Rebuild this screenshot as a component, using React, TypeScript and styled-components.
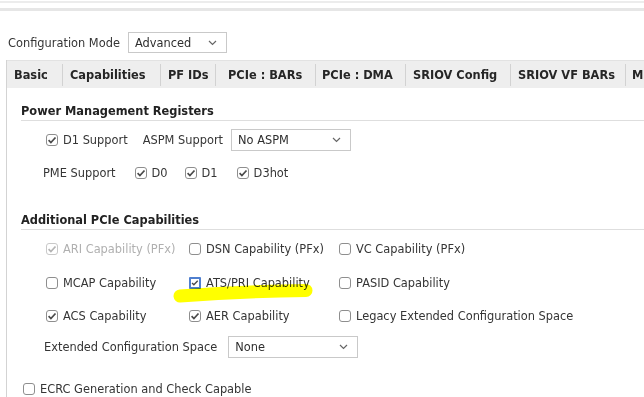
import React from 'react';
import styled, { createGlobalStyle } from 'styled-components';

const GlobalStyle = createGlobalStyle`
  html, body {
    margin: 0;
    padding: 0;
    background: #ffffff;
  }
  body {
    font-family: 'DejaVu Sans', 'Liberation Sans', sans-serif;
    font-size: 11.4px;
    color: #353535;
  }
`;

// widths measured off the original tab strip
const tabs = [
  { label: 'Basic', width: 56, pad: 7 },
  { label: 'Capabilities', width: 98, pad: 7 },
  { label: 'PF IDs', width: 55, pad: 7 },
  { label: 'PCIe : BARs', width: 100, pad: 12 },
  { label: 'PCIe : DMA', width: 90, pad: 6 },
  { label: 'SRIOV Config', width: 105, pad: 7 },
  { label: 'SRIOV VF BARs', width: 115, pad: 7 },
  { label: 'MSIX', width: 60, pad: 6 },
];

const Page = styled.div`
  position: relative;
  width: 644px;
  height: 397px;
  overflow: hidden;
`;

const TopRule = styled.div<{ $h: number; $top: number; $color: string }>`
  height: ${(p) => p.$h}px;
  margin-top: ${(p) => p.$top}px;
  background: ${(p) => p.$color};
`;

const ConfigRow = styled.div`
  display: flex;
  align-items: center;
  gap: 8px;
  margin-top: 21px;
  padding-left: 8px;
  height: 21px;
`;

const Select = styled.div<{ $w: number; $h?: number }>`
  box-sizing: border-box;
  width: ${(p) => p.$w}px;
  height: ${(p) => p.$h ?? 22}px;
  border: 1px solid #c9c9c9;
  background: #fff;
  display: flex;
  align-items: center;
  justify-content: space-between;
  padding: 0 9px 0 6px;
  color: #2e2e2e;
  flex: none;
`;

const TabPanel = styled.div`
  margin-top: 7px;
  margin-left: 6px;
  border-left: 1px solid #d3d3d3;
  height: 400px;
`;

const TabBar = styled.div`
  display: flex;
  align-items: center;
  height: 28px;
  background: #eeeeee;
  border-top: 1px solid #e2e2e2;
  box-sizing: border-box;
  white-space: nowrap;
  overflow: hidden;
`;

const Tab = styled.div<{ $w: number; $pad: number }>`
  box-sizing: border-box;
  width: ${(p) => p.$w}px;
  height: 22px;
  line-height: 22px;
  padding-left: ${(p) => p.$pad}px;
  border-right: 1px solid #d2d2d2;
  font-weight: bold;
  color: #262626;
  flex: none;
  overflow: hidden;
`;

const Content = styled.div`
  padding-left: 14px;
  display: flex;
  flex-direction: column;
`;

const SectionTitle = styled.div<{ $top: number }>`
  margin-top: ${(p) => p.$top}px;
  line-height: 16px;
  padding-bottom: 1px;
  border-bottom: 1px solid #dedede;
  font-weight: bold;
  color: #222;
`;

const Row = styled.div<{ $top: number; $indent: number; $h?: number }>`
  display: flex;
  align-items: center;
  margin-top: ${(p) => p.$top}px;
  padding-left: ${(p) => p.$indent}px;
  height: ${(p) => p.$h ?? 22}px;
  white-space: nowrap;
`;

const Label = styled.span<{ $gap?: number }>`
  margin-right: ${(p) => p.$gap ?? 0}px;
`;

const CapGrid = styled.div`
  display: grid;
  grid-template-columns: 143px 150px auto;
  grid-auto-rows: 20px;
  row-gap: 13.5px;
  margin-top: 9px;
  padding-left: 25px;
`;

const Item = styled.label<{ $disabled?: boolean; $space?: number }>`
  display: flex;
  align-items: center;
  gap: 5px;
  white-space: nowrap;
  color: ${(p) => (p.$disabled ? '#b0b0b0' : '#353535')};
  margin-right: ${(p) => p.$space ?? 0}px;
`;

const Box = styled.span<{ $disabled?: boolean; $focused?: boolean }>`
  box-sizing: border-box;
  width: 12px;
  height: 12px;
  flex: none;
  display: inline-flex;
  align-items: center;
  justify-content: center;
  background: #fff;
  border: ${(p) =>
    p.$focused
      ? '2px solid #4f7fcf'
      : p.$disabled
        ? '1px solid #c9c9c9'
        : '1px solid #8e8e8e'};
  border-radius: ${(p) => (p.$focused ? '1px' : '3px')};
`;

const Highlight = styled.svg`
  position: absolute;
  left: 0;
  top: 0;
  pointer-events: none;
  mix-blend-mode: multiply;
`;

const Chevron = () => (
  <svg width="9" height="6" viewBox="0 0 9 6">
    <path d="M1 1 L4.5 4.5 L8 1" fill="none" stroke="#666" strokeWidth="1.2" />
  </svg>
);

type CheckProps = {
  label: string;
  checked?: boolean;
  disabled?: boolean;
  focused?: boolean;
  space?: number;
};

const Check: React.FC<CheckProps> = ({ label, checked, disabled, focused, space }) => (
  <Item $disabled={disabled} $space={space}>
    <Box $disabled={disabled} $focused={focused}>
      {checked && (
        <svg width="10" height="10" viewBox="0 0 10 10">
          <path
            d={focused ? 'M1.3 5 L3.6 7.3 L8.4 2.2' : 'M1.6 5.2 L3.9 7.5 L8.5 2.5'}
            fill="none"
            stroke={disabled ? '#b4b4b4' : '#4a4a4a'}
            strokeWidth="1.7"
          />
        </svg>
      )}
    </Box>
    {label}
  </Item>
);

const App: React.FC = () => {
  return (
    <Page>
      <GlobalStyle />
      <TopRule $h={2} $top={1} $color="#ececec" />
      <TopRule $h={3} $top={5} $color="#e6e6e6" />
      <ConfigRow>
        <span>Configuration Mode</span>
        <Select $w={99} $h={21}>
          <span>Advanced</span>
          <Chevron />
        </Select>
      </ConfigRow>
      <TabPanel>
        <TabBar>
          {tabs.map((t) => (
            <Tab key={t.label} $w={t.width} $pad={t.pad}>
              {t.label}
            </Tab>
          ))}
        </TabBar>
        <Content>
          <SectionTitle $top={15}>Power Management Registers</SectionTitle>
          <Row $top={8} $indent={25}>
            <Check label="D1 Support" checked space={15} />
            <Label $gap={8}>ASPM Support</Label>
            <Select $w={120}>
              <span>No ASPM</span>
              <Chevron />
            </Select>
          </Row>
          <Row $top={11} $indent={22}>
            <Label $gap={19}>PME Support</Label>
            <Check label="D0" checked space={17} />
            <Check label="D1" checked space={19} />
            <Check label="D3hot" checked />
          </Row>
          <SectionTitle $top={28}>Additional PCIe Capabilities</SectionTitle>
          <CapGrid>
            <Check label="ARI Capability (PFx)" checked disabled />
            <Check label="DSN Capability (PFx)" />
            <Check label="VC Capability (PFx)" />
            <Check label="MCAP Capability" />
            <Check label="ATS/PRI Capability" checked focused />
            <Check label="PASID Capability" />
            <Check label="ACS Capability" checked />
            <Check label="AER Capability" checked />
            <Check label="Legacy Extended Configuration Space" />
          </CapGrid>
          <Row $top={10} $indent={23}>
            <Label $gap={11}>Extended Configuration Space</Label>
            <Select $w={130}>
              <span>None</span>
              <Chevron />
            </Select>
          </Row>
          <Row $top={23} $indent={2} $h={16}>
            <Check label="ECRC Generation and Check Capable" />
          </Row>
        </Content>
      </TabPanel>
      <Highlight width="644" height="397" viewBox="0 0 644 397">
        <path
          d="M180 296 C 220 293, 265 291, 306 290.5"
          fill="none"
          stroke="#ffff00"
          strokeWidth="13"
          strokeLinecap="round"
        />
      </Highlight>
    </Page>
  );
};

export default App;
